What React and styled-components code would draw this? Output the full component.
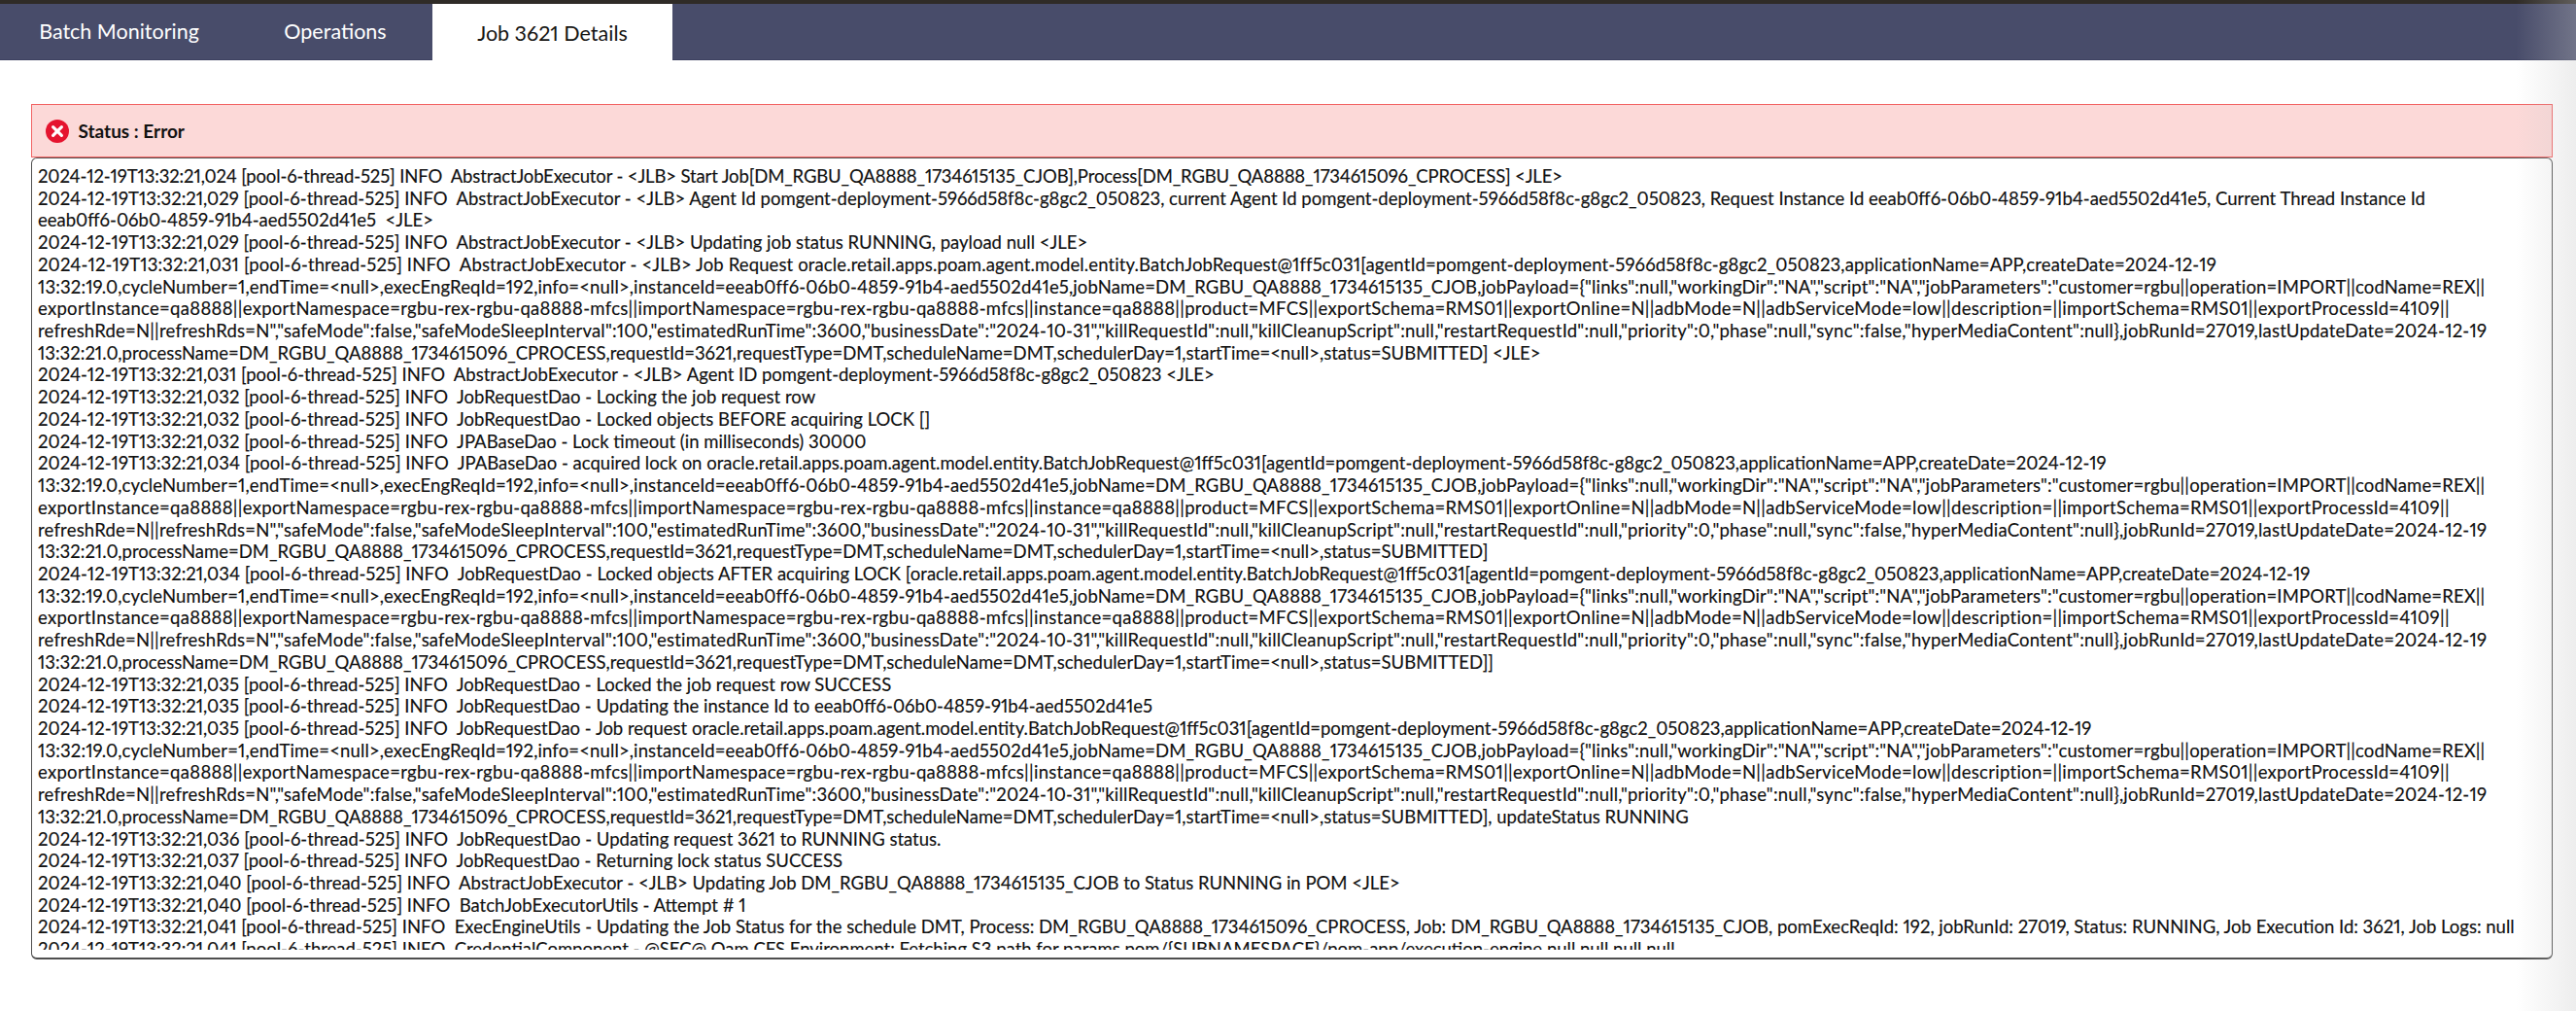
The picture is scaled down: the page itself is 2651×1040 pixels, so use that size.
import React from 'react'
import styled, { createGlobalStyle } from 'styled-components'

const fullLog = (job) => [
  { spread: 0.13, text: `13:32:19.0,cycleNumber=1,endTime=<null>,execEngReqId=192,info=<null>,instanceId=eeab0ff6-06b0-4859-91b4-aed5502d41e5,jobName=DM_RGBU_QA8888_1734615135_CJOB,jobPayload={"links":null,"workingDir":"NA","script":"NA","jobParameters":"customer=rgbu||operation=IMPORT||codName=REX||` },
  { spread: 0.29, text: `exportInstance=qa8888||exportNamespace=rgbu-rex-rgbu-qa8888-mfcs||importNamespace=rgbu-rex-rgbu-qa8888-mfcs||instance=qa8888||product=MFCS||exportSchema=RMS01||exportOnline=N||adbMode=N||adbServiceMode=low||description=||importSchema=RMS01||exportProcessId=4109||` },
  { spread: 0.2, text: `refreshRde=N||refreshRds=N","safeMode":false,"safeModeSleepInterval":100,"estimatedRunTime":3600,"businessDate":"2024-10-31","killRequestId":null,"killCleanupScript":null,"restartRequestId":null,"priority":0,"phase":null,"sync":false,"hyperMediaContent":null},jobRunId=27019,lastUpdateDate=2024-12-19` },
  { spread: 0, text: `13:32:21.0,processName=DM_RGBU_QA8888_1734615096_CPROCESS,requestId=3621,requestType=DMT,scheduleName=DMT,schedulerDay=1,startTime=<null>,status=SUBMITTED]${job}` },
]

const entity = 'oracle.retail.apps.poam.agent.model.entity.BatchJobRequest@1ff5c031[agentId=pomgent-deployment-5966d58f8c-g8gc2_050823,applicationName=APP,createDate=2024-12-19'
const head = '[pool-6-thread-525] INFO  '

const logLines = [
  { spread: -0.13, text: `2024-12-19T13:32:21,024 ${head}AbstractJobExecutor - <JLB> Start Job[DM_RGBU_QA8888_1734615135_CJOB],Process[DM_RGBU_QA8888_1734615096_CPROCESS] <JLE>` },
  `2024-12-19T13:32:21,029 ${head}AbstractJobExecutor - <JLB> Agent Id pomgent-deployment-5966d58f8c-g8gc2_050823, current Agent Id pomgent-deployment-5966d58f8c-g8gc2_050823, Request Instance Id eeab0ff6-06b0-4859-91b4-aed5502d41e5, Current Thread Instance Id`,
  `eeab0ff6-06b0-4859-91b4-aed5502d41e5  <JLE>`,
  `2024-12-19T13:32:21,029 ${head}AbstractJobExecutor - <JLB> Updating job status RUNNING, payload null <JLE>`,
  { spread: 0.12, text: `2024-12-19T13:32:21,031 ${head}AbstractJobExecutor - <JLB> Job Request ${entity}` },
  ...fullLog(' <JLE>'),
  `2024-12-19T13:32:21,031 ${head}AbstractJobExecutor - <JLB> Agent ID pomgent-deployment-5966d58f8c-g8gc2_050823 <JLE>`,
  `2024-12-19T13:32:21,032 ${head}JobRequestDao - Locking the job request row`,
  `2024-12-19T13:32:21,032 ${head}JobRequestDao - Locked objects BEFORE acquiring LOCK []`,
  `2024-12-19T13:32:21,032 ${head}JPABaseDao - Lock timeout (in milliseconds) 30000`,
  `2024-12-19T13:32:21,034 ${head}JPABaseDao - acquired lock on ${entity}`,
  ...fullLog(''),
  `2024-12-19T13:32:21,034 ${head}JobRequestDao - Locked objects AFTER acquiring LOCK [${entity}`,
  ...fullLog(']'),
  `2024-12-19T13:32:21,035 ${head}JobRequestDao - Locked the job request row SUCCESS`,
  `2024-12-19T13:32:21,035 ${head}JobRequestDao - Updating the instance Id to eeab0ff6-06b0-4859-91b4-aed5502d41e5`,
  `2024-12-19T13:32:21,035 ${head}JobRequestDao - Job request ${entity}`,
  ...fullLog(', updateStatus RUNNING'),
  `2024-12-19T13:32:21,036 ${head}JobRequestDao - Updating request 3621 to RUNNING status.`,
  `2024-12-19T13:32:21,037 ${head}JobRequestDao - Returning lock status SUCCESS`,
  `2024-12-19T13:32:21,040 ${head}AbstractJobExecutor - <JLB> Updating Job DM_RGBU_QA8888_1734615135_CJOB to Status RUNNING in POM <JLE>`,
  `2024-12-19T13:32:21,040 ${head}BatchJobExecutorUtils - Attempt # 1`,
  `2024-12-19T13:32:21,041 ${head}ExecEngineUtils - Updating the Job Status for the schedule DMT, Process: DM_RGBU_QA8888_1734615096_CPROCESS, Job: DM_RGBU_QA8888_1734615135_CJOB, pomExecReqId: 192, jobRunId: 27019, Status: RUNNING, Job Execution Id: 3621, Job Logs: null`,
  `2024-12-19T13:32:21,041 ${head}CredentialComponent - @SEC@ Oam CFS Environment: Fetching S3 path for params pom/{SUBNAMESPACE}/pom-app/execution-engine null null null null`,
]

function App() {
  return (
    <Page>
      <GlobalStyle />
      <TabBar>
        <Tab width="245px">Batch Monitoring</Tab>
        <Tab width="200px">Operations</Tab>
        <Tab active width="247px">Job 3621 Details</Tab>
      </TabBar>
      <Content>
        <StatusBanner>
          <svg width="24" height="24" viewBox="0 0 24 24">
            <circle cx="12" cy="12" r="12" fill="#e5142f" />
            <path d="M7.6 7.6l8.8 8.8M16.4 7.6l-8.8 8.8" stroke="#fff" strokeWidth="3.2" strokeLinecap="round" />
          </svg>
          <StatusText>Status : Error</StatusText>
        </StatusBanner>
        <LogBox>
          <LogText>
            {logLines.map((line, i) => (
              <LogLine key={i} spread={line.spread}>{line.text || line}</LogLine>
            ))}
          </LogText>
        </LogBox>
      </Content>
      <EdgeFade />
    </Page>
  )
}

export default App

const GlobalStyle = createGlobalStyle`
  html, body {
    margin: 0;
    padding: 0;
    background: #fff;
  }
`

const Page = styled.div`
  position: relative;
  width: 2651px;
  height: 1040px;
  overflow: hidden;
  background: #fff;
  font-family: Lato, "Noto Sans", sans-serif;
  font-variant-numeric: proportional-nums;
  color: #111;
`

const TabBar = styled.div`
  display: flex;
  height: 57px;
  border-top: 4px solid #2f2b27;
  border-bottom: 1px solid #3d4160;
  background: #484c6a;
`

const Tab = styled.div`
  display: flex;
  align-items: center;
  justify-content: center;
  flex-shrink: 0;
  width: ${props => props.width};
  height: ${props => (props.active ? '59px' : '55px')};
  font-size: 21.5px;
  color: ${props => (props.active ? '#161513' : '#fff')};
  background: ${props => (props.active ? '#fff' : 'transparent')};
`

const Content = styled.div`
  padding: 45px 24px 0 32px;
`

const StatusBanner = styled.div`
  display: flex;
  align-items: center;
  gap: 10px;
  height: 55px;
  padding-left: 13.5px;
  box-sizing: border-box;
  background: #fcd9d8;
  border: 1.5px solid #f26464;
`

const StatusText = styled.span`
  font-size: 19px;
  font-weight: 700;
`

const LogBox = styled.div`
  height: 825px;
  padding: 7px 6px 8px 6px;
  box-sizing: border-box;
  background: #fff;
  border: 1.5px solid #4f4f4f;
  border-bottom-width: 2.5px;
  border-radius: 6px;
`

const LogText = styled.div`
  height: 100%;
  overflow: hidden;
  font-size: 18.5px;
  line-height: 22.72px;
  -webkit-text-stroke: 0.15px #111;
`

const LogLine = styled.div`
  white-space: pre;
  letter-spacing: ${props => props.spread || 0}px;
`

const EdgeFade = styled.div`
  position: absolute;
  top: 0;
  right: 0;
  width: 62px;
  height: 100%;
  pointer-events: none;
  background: linear-gradient(to right, rgba(200, 200, 200, 0), rgba(200, 200, 200, 0.32));
`
